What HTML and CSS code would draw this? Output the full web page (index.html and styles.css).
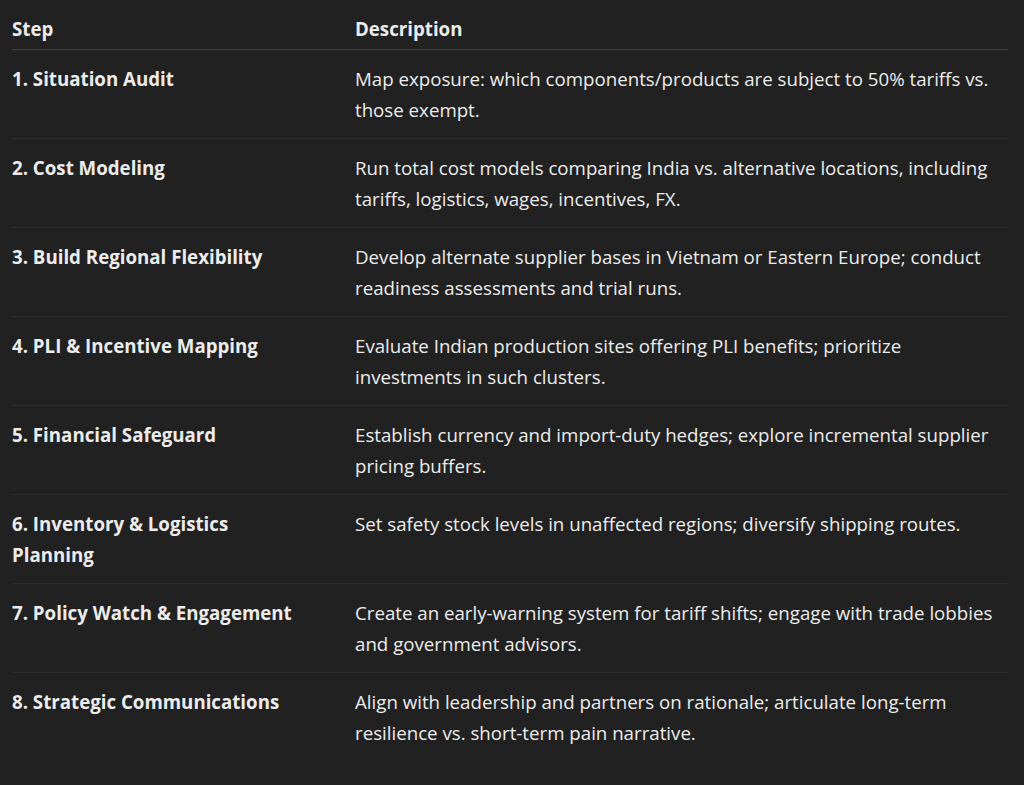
FILE: index.html
```html
<!DOCTYPE html>
<html lang="en">
<head>
<meta charset="utf-8">
<title>Mitigation Steps</title>
<link rel="stylesheet" href="styles.css">
</head>
<body>
<table class="steps">
  <thead>
    <tr><th class="col-step">Step</th><th class="col-desc">Description</th></tr>
  </thead>
  <tbody>
    <tr><td class="col-step">1. Situation Audit</td><td class="col-desc">Map exposure: which components/products are subject to 50% tariffs vs. those exempt.</td></tr>
    <tr><td class="col-step">2. Cost Modeling</td><td class="col-desc">Run total cost models comparing India vs. alternative locations, including tariffs, logistics, wages, incentives, FX.</td></tr>
    <tr><td class="col-step">3. Build Regional Flexibility</td><td class="col-desc">Develop alternate supplier bases in Vietnam or Eastern Europe; conduct readiness assessments and trial runs.</td></tr>
    <tr><td class="col-step">4. PLI &amp; Incentive Mapping</td><td class="col-desc">Evaluate Indian production sites offering PLI benefits; prioritize investments in such clusters.</td></tr>
    <tr><td class="col-step">5. Financial Safeguard</td><td class="col-desc">Establish currency and import-duty hedges; explore incremental supplier pricing buffers.</td></tr>
    <tr><td class="col-step">6. Inventory &amp; Logistics Planning</td><td class="col-desc">Set safety stock levels in unaffected regions; diversify shipping routes.</td></tr>
    <tr><td class="col-step">7. Policy Watch &amp; Engagement</td><td class="col-desc">Create an early-warning system for tariff shifts; engage with trade lobbies and government advisors.</td></tr>
    <tr><td class="col-step">8. Strategic Communications</td><td class="col-desc">Align with leadership and partners on rationale; articulate long-term resilience vs. short-term pain narrative.</td></tr>
  </tbody>
</table>
</body>
</html>
```
FILE: styles.css
```css
html, body {
  margin: 0;
  background: #212121;
}
body {
  height: 785px;
  overflow: hidden;
  color: #ececec;
  font-family: "Open Sans", "Noto Sans", sans-serif;
  font-size: 18.7px;
  line-height: 31px;
}
.steps {
  margin: 0 16px 0 12px;
  width: 996px;
  border-collapse: collapse;
  table-layout: fixed;
}
.steps th,
.steps td {
  text-align: left;
  vertical-align: top;
  padding: 13px 8px 13px 0;
}
.steps th {
  font-weight: 700;
  padding: 13px 8px 5px 0;
  border-bottom: 1px solid #424242;
}
.steps .col-step {
  width: 343px;
  padding-right: 48px;
  box-sizing: border-box;
}
.steps td.col-step {
  font-weight: 700;
}
.steps tbody tr {
  border-bottom: 1px solid #2d2d2d;
}
.steps tbody tr:last-child {
  border-bottom: none;
}
```
